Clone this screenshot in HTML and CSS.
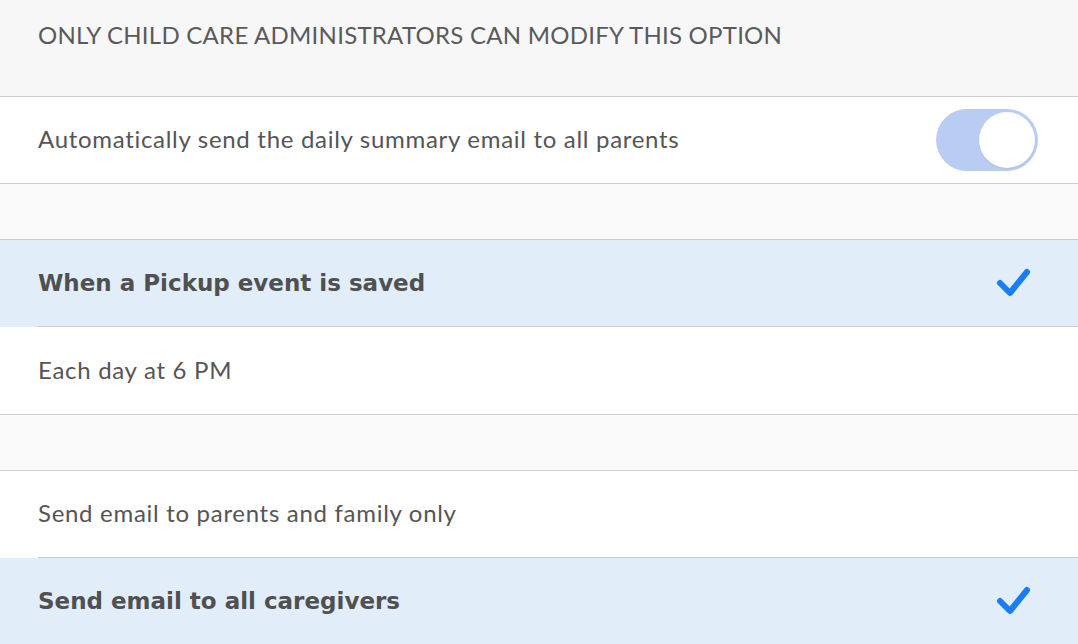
FILE: index.html
```html
<!DOCTYPE html>
<html>
<head>
<meta charset="utf-8">
<link rel="stylesheet" href="styles.css">
</head>
<body>
<div class="page">
  <div class="header">ONLY CHILD CARE ADMINISTRATORS CAN MODIFY THIS OPTION</div>
  <div class="row border-bottom">
    <span class="label">Automatically send the daily summary email to all parents</span>
    <div class="toggle"><div class="knob"></div></div>
  </div>
  <div class="gap"></div>
  <div class="group">
    <div class="row selected inset">
      <span class="label bold">When a Pickup event is saved</span>
      <svg class="check" width="34" height="30" viewBox="0 0 34 30"><path d="M4 15 L14 25 L31 4" fill="none" stroke="#1a7cf6" stroke-width="6" stroke-linecap="round" stroke-linejoin="round"/></svg>
    </div>
    <div class="row tall">
      <span class="label">Each day at 6 PM</span>
    </div>
  </div>
  <div class="gap"></div>
  <div class="group">
    <div class="row inset">
      <span class="label">Send email to parents and family only</span>
    </div>
    <div class="row selected">
      <span class="label bold">Send email to all caregivers</span>
      <svg class="check" width="34" height="30" viewBox="0 0 34 30"><path d="M4 15 L14 25 L31 4" fill="none" stroke="#1a7cf6" stroke-width="6" stroke-linecap="round" stroke-linejoin="round"/></svg>
    </div>
  </div>
</div>
</body>
</html>
```

FILE: styles.css
```css
html, body {
  margin: 0;
  padding: 0;
  background: #fafafa;
}
.page {
  width: 1078px;
  height: 644px;
  overflow: hidden;
  font-family: "Lato", "Noto Sans", sans-serif;
  color: #555555;
}
.header {
  height: 97px;
  box-sizing: border-box;
  padding: 23px 0 0 38px;
  line-height: 24px;
  background: #f7f7f7;
  border-bottom: 1px solid #cccccc;
  font-size: 24px;
  letter-spacing: 0.25px;
  color: #5a5a5a;
}
.row {
  height: 86px;
  display: flex;
  align-items: center;
  justify-content: space-between;
  padding: 0 40px 0 38px;
  background: #ffffff;
  position: relative;
}
.row.tall {
  height: 87px;
}
.border-bottom {
  border-bottom: 1px solid #cccccc;
}
.group {
  border-top: 1px solid #cccccc;
  border-bottom: 1px solid #cccccc;
}
.row.inset {
  border-bottom: 1px solid transparent;
}
.row.inset::after {
  content: "";
  position: absolute;
  left: 38px;
  right: 0;
  bottom: -1px;
  height: 1px;
  background: #cccccc;
}
.row.selected {
  background: #e1edf9;
}
.gap {
  height: 55px;
  background: #fafafa;
}
.label {
  font-size: 24px;
  letter-spacing: 0.7px;
  margin-top: -3px;
}
.label.bold {
  font-family: "DejaVu Sans", "Lato", sans-serif;
  font-size: 23px;
  font-weight: 700;
  letter-spacing: 0;
  margin-top: 0;
  color: #505050;
}
.toggle {
  width: 102px;
  height: 62px;
  border-radius: 31px;
  background: #b9cdf2;
  display: flex;
  align-items: center;
  justify-content: flex-end;
  padding-right: 3px;
  box-sizing: border-box;
}
.knob {
  width: 56px;
  height: 56px;
  border-radius: 50%;
  background: #ffffff;
  box-shadow: 0 1px 2px rgba(0,0,0,0.08);
}
.check {
  margin-right: 8px;
}
```
